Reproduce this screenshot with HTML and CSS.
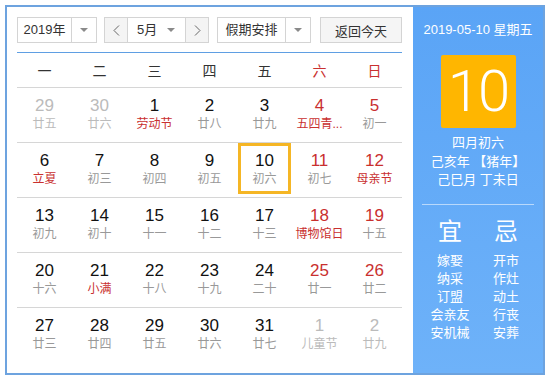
FILE: index.html
```html
<!DOCTYPE html>
<html lang="zh">
<head>
<meta charset="utf-8">
<link rel="stylesheet" href="styles.css">
</head>
<body>
<div class="cal">
  <div class="main">
    <div class="toolbar">
      <div class="sel sel-year"><span class="sel-text">2019年</span><span class="sel-arrow"><i class="tri"></i></span></div>
      <div class="month-group">
        <span class="nav-btn"><svg width="7" height="11" viewBox="0 0 7 11"><polyline points="6,0.5 1,5.5 6,10.5" fill="none" stroke="#666" stroke-width="1"/></svg></span>
        <span class="month-sel"><span class="sel-text">5月</span><i class="tri"></i></span>
        <span class="nav-btn nav-next"><svg width="7" height="11" viewBox="0 0 7 11"><polyline points="1,0.5 6,5.5 1,10.5" fill="none" stroke="#666" stroke-width="1"/></svg></span>
      </div>
      <div class="sel sel-holiday"><span class="sel-text">假期安排</span><span class="sel-arrow"><i class="tri"></i></span></div>
      <div class="today-btn">返回今天</div>
    </div>
    <div class="weekdays">
      <span>一</span><span>二</span><span>三</span><span>四</span><span>五</span><span class="red">六</span><span class="red">日</span>
    </div>
    <div class="grid">
      <div class="row">
        <div class="cell other"><b>29</b><em>廿五</em></div>
        <div class="cell other"><b>30</b><em>廿六</em></div>
        <div class="cell"><b>1</b><em class="fest">劳动节</em></div>
        <div class="cell"><b>2</b><em>廿八</em></div>
        <div class="cell"><b>3</b><em>廿九</em></div>
        <div class="cell wk"><b>4</b><em class="fest">五四青...</em></div>
        <div class="cell wk"><b>5</b><em>初一</em></div>
      </div>
      <div class="row">
        <div class="cell"><b>6</b><em class="fest">立夏</em></div>
        <div class="cell"><b>7</b><em>初三</em></div>
        <div class="cell"><b>8</b><em>初四</em></div>
        <div class="cell"><b>9</b><em>初五</em></div>
        <div class="cell today"><b>10</b><em>初六</em></div>
        <div class="cell wk"><b>11</b><em>初七</em></div>
        <div class="cell wk"><b>12</b><em class="fest">母亲节</em></div>
      </div>
      <div class="row">
        <div class="cell"><b>13</b><em>初九</em></div>
        <div class="cell"><b>14</b><em>初十</em></div>
        <div class="cell"><b>15</b><em>十一</em></div>
        <div class="cell"><b>16</b><em>十二</em></div>
        <div class="cell"><b>17</b><em>十三</em></div>
        <div class="cell wk"><b>18</b><em class="fest">博物馆日</em></div>
        <div class="cell wk"><b>19</b><em>十五</em></div>
      </div>
      <div class="row">
        <div class="cell"><b>20</b><em>十六</em></div>
        <div class="cell"><b>21</b><em class="fest">小满</em></div>
        <div class="cell"><b>22</b><em>十八</em></div>
        <div class="cell"><b>23</b><em>十九</em></div>
        <div class="cell"><b>24</b><em>二十</em></div>
        <div class="cell wk"><b>25</b><em>廿一</em></div>
        <div class="cell wk"><b>26</b><em>廿二</em></div>
      </div>
      <div class="row last">
        <div class="cell"><b>27</b><em>廿三</em></div>
        <div class="cell"><b>28</b><em>廿四</em></div>
        <div class="cell"><b>29</b><em>廿五</em></div>
        <div class="cell"><b>30</b><em>廿六</em></div>
        <div class="cell"><b>31</b><em>廿七</em></div>
        <div class="cell other"><b>1</b><em>儿童节</em></div>
        <div class="cell other"><b>2</b><em>廿九</em></div>
      </div>
    </div>
  </div>
  <div class="side">
    <div class="side-date">2019-05-10 星期五</div>
    <div class="big-day">10</div>
    <div class="lunar">
      <div>四月初六</div>
      <div>己亥年 【猪年】</div>
      <div>己巳月 丁未日</div>
    </div>
    <div class="sep"></div>
    <div class="yiji">
      <div class="col">
        <div class="yj-title">宜</div>
        <div>嫁娶</div><div>纳采</div><div>订盟</div><div>会亲友</div><div>安机械</div>
      </div>
      <div class="col">
        <div class="yj-title">忌</div>
        <div>开市</div><div>作灶</div><div>动土</div><div>行丧</div><div>安葬</div>
      </div>
    </div>
  </div>
</div>
</body>
</html>
```

FILE: styles.css
```css
* { box-sizing: border-box; }
body {
  margin: 0;
  background: #fff;
  font-family: "Liberation Sans", "Noto Sans CJK SC", sans-serif;
  color: #333;
}
.cal {
  margin: 5px;
  width: 540px;
  height: 370px;
  border: 2px solid #6da3df;
  display: flex;
}
.main {
  width: 406px;
  padding: 10px 11px 0 10px;
}
.toolbar {
  display: flex;
  height: 26px;
  margin-bottom: 9px;
}
.sel, .month-group, .today-btn {
  border: 1px solid #d4d4d4;
  height: 26px;
  display: flex;
  align-items: center;
  font-size: 13px;
  color: #333;
}
.sel-year { width: 80px; }
.sel-holiday { width: 94px; margin-left: 8px; }
.sel-text { flex: 1; text-align: center; line-height: 24px; }
.sel-arrow {
  width: 25px;
  height: 24px;
  border-left: 1px solid #d4d4d4;
  display: flex;
  align-items: center;
  justify-content: center;
}
.tri {
  display: block;
  width: 0;
  height: 0;
  border-left: 4px solid transparent;
  border-right: 4px solid transparent;
  border-top: 4px solid #8a8a8a;
}
.month-group { width: 105px; margin-left: 7px; }
.nav-btn {
  width: 23px;
  height: 24px;
  background: #f4f4f4;
  display: flex;
  align-items: center;
  justify-content: center;
  border-right: 1px solid #d4d4d4;
}
.nav-next { border-right: none; border-left: 1px solid #d4d4d4; }
.month-sel {
  flex: 1;
  display: flex;
  align-items: center;
  padding-right: 10px;
}
.month-sel .sel-text { text-align: left; padding-left: 9px; }
.today-btn {
  width: 82px;
  margin-left: 9px;
  justify-content: center;
  background: #f5f5f5;
}
.weekdays {
  display: grid;
  grid-template-columns: repeat(7, 55px);
  height: 36px;
  border-top: 1px solid #5f9fe3;
  border-bottom: 1px solid #d6d6d6;
  align-items: center;
  font-size: 14px;
  color: #333;
  text-align: center;
}
.red { color: #c9302f; }
.row {
  display: grid;
  grid-template-columns: repeat(7, 55px);
  height: 55px;
  border-bottom: 1px solid #d6d6d6;
}
.row.last { border-bottom: none; }
.cell {
  height: 51px;
  margin: 0 1px 3px;
  border: 3px solid transparent;
  padding-top: 5px;
  display: flex;
  flex-direction: column;
  align-items: center;
}
.cell b {
  font-weight: normal;
  font-size: 17px;
  line-height: 20px;
  color: #111;
}
.cell em {
  font-style: normal;
  font-size: 12px;
  line-height: 16px;
  color: #999;
  white-space: nowrap;
}
.cell.wk b { color: #c9302f; }
.cell em.fest { color: #c9302f; }
.cell.other b, .cell.other em { color: #bbb; }
.cell.today { border-color: #f5b625; }
.side {
  width: 130px;
  height: 366px;
  background: linear-gradient(#5aa4f6, #6eb2f9);
  color: #fff;
  text-align: center;
}
.side-date {
  margin-top: 13px;
  font-size: 13px;
  line-height: 20px;
}
.big-day {
  width: 75px;
  height: 73px;
  margin: 15px auto 0;
  background: #ffb600;
  border-radius: 2px;
  font-family: Roboto, "Liberation Sans", sans-serif;
  font-weight: 300;
  font-size: 58px;
  line-height: 73px;
  letter-spacing: -2px;
  color: #fff;
}
.lunar {
  margin-top: 6px;
  font-size: 13px;
  line-height: 18.5px;
}
.sep {
  height: 1px;
  margin: 14px 9px 0 9px;
  background: rgba(255,255,255,0.55);
}
.yiji {
  width: 112px;
  margin: 13px auto 0;
  display: grid;
  grid-template-columns: 56px 56px;
  font-size: 13px;
  line-height: 18px;
}
.yj-title {
  font-size: 24px;
  line-height: 28px;
  margin-bottom: 6px;
}
```
